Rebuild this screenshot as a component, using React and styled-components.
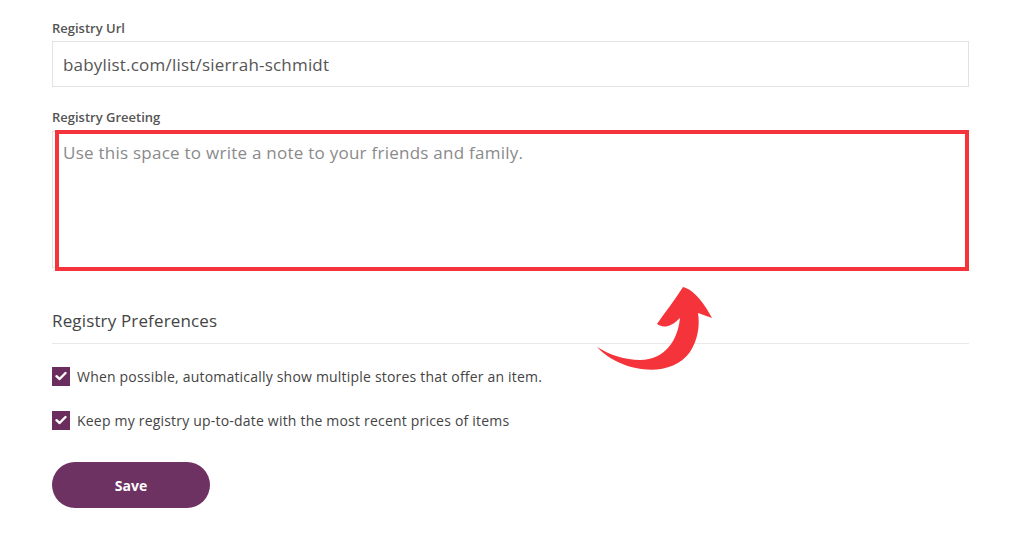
import React from "react";
import styled, { createGlobalStyle } from "styled-components";

const Global = createGlobalStyle`
  html, body { margin: 0; padding: 0; background: #fff; }
  body { font-family: "Open Sans", "Liberation Sans", sans-serif; }
  * { box-sizing: border-box; }
`;

const Page = styled.div`
  width: 1024px;
  height: 546px;
  padding: 20px 55px 0 52px;
  overflow: hidden;
`;

const Field = styled.div`
  display: flex;
  flex-direction: column;
  margin-top: ${(p) => p.$top || 0}px;
`;

const Label = styled.label`
  font-size: 13px;
  line-height: 16px;
  font-weight: 600;
  color: #555;
  margin-bottom: ${(p) => p.$gap || 5}px;
`;

const Input = styled.div`
  height: 46px;
  border: 1px solid #e2e2e2;
  padding: 0 10px;
  display: flex;
  align-items: center;
  font-size: 17px;
  letter-spacing: 0.2px;
  color: #555;
`;

const AreaWrap = styled.div`
  position: relative;
`;

const TextArea = styled.div`
  height: 137px;
  border: 1px solid #e2e2e2;
  padding: 10px 10px;
  font-size: 17px;
  letter-spacing: 0.25px;
  line-height: 22px;
  color: #8a8a8a;
`;

const Highlight = styled.div`
  position: absolute;
  left: 3px;
  right: 0;
  top: -1px;
  bottom: -3px;
  border: 4px solid #f5333a;
  pointer-events: none;
`;

const Section = styled.div`
  margin-top: 42px;
  position: relative;
`;

const Heading = styled.h2`
  margin: 0;
  padding-bottom: 11px;
  border-bottom: 1px solid #e9e9e9;
  font-size: 17px;
  letter-spacing: 0.15px;
  line-height: 22px;
  font-weight: 400;
  color: #444;
`;

const Options = styled.div`
  display: flex;
  flex-direction: column;
  gap: 24px;
  margin-top: 22px;
`;

const Option = styled.div`
  display: flex;
  align-items: center;
  gap: 7px;
  height: 20px;
  font-size: 14px;
  letter-spacing: 0.2px;
  color: #444;
`;

const Box = styled.span`
  width: 18px;
  height: 19px;
  background: #6b2d5e;
  display: flex;
  align-items: center;
  justify-content: center;
  flex-shrink: 0;
`;

const SaveButton = styled.button`
  margin-top: 32px;
  width: 158px;
  height: 46px;
  border: none;
  border-radius: 23px;
  background: #6d3162;
  color: #fff;
  font-family: inherit;
  font-size: 14px;
  font-weight: 700;
  cursor: pointer;
`;

const Arrow = styled.svg`
  position: absolute;
  left: 545px;
  top: -23px;
  width: 120px;
  height: 90px;
  overflow: visible;
`;

const Check = () => (
  <svg width="12" height="10" viewBox="0 0 12 10">
    <path d="M1.5 5.2 L4.6 8 L10.5 2" fill="none" stroke="#fff" strokeWidth="2.4" strokeLinecap="round" strokeLinejoin="round" />
  </svg>
);

export default function App() {
  return (
    <Page>
      <Global />
      <Field>
        <Label>Registry Url</Label>
        <Input>babylist.com/list/sierrah-schmidt</Input>
      </Field>
      <Field $top={22}>
        <Label $gap={6}>Registry Greeting</Label>
        <AreaWrap>
          <TextArea>Use this space to write a note to your friends and family.</TextArea>
          <Highlight />
        </AreaWrap>
      </Field>
      <Section>
        <Heading>Registry Preferences</Heading>
        <Arrow viewBox="597 287 120 90">
          <path
            d="M597 347 C620 372 670 380 690 352 C698 340 700 325 698 313 L712 318 C705 305 695 290 683 287 C675 300 665 312 657 324 C663 328 670 328 680 318 C678 340 665 360 640 360 C625 360 610 355 597 347 Z"
            fill="#f5333a"
          />
        </Arrow>
        <Options>
          <Option>
            <Box><Check /></Box>
            When possible, automatically show multiple stores that offer an item.
          </Option>
          <Option>
            <Box><Check /></Box>
            Keep my registry up-to-date with the most recent prices of items
          </Option>
        </Options>
        <SaveButton>Save</SaveButton>
      </Section>
    </Page>
  );
}
